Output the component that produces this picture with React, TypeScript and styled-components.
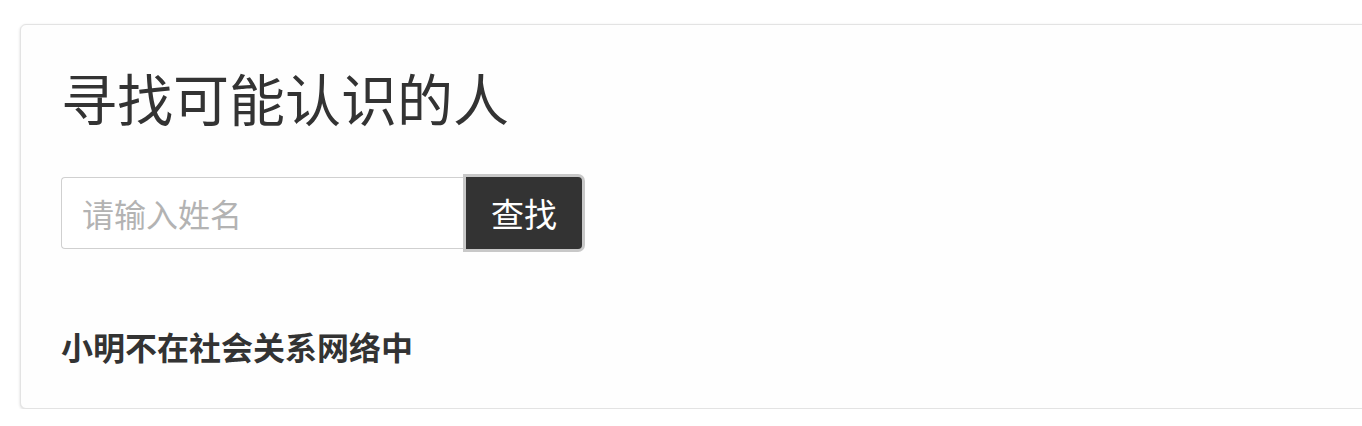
import React from "react";
import styled, { createGlobalStyle } from "styled-components";

const GlobalStyle = createGlobalStyle`
  html, body {
    margin: 0;
    padding: 0;
    background: #ffffff;
    overflow: hidden;
  }
  body {
    font-family: "Noto Sans CJK SC", "Noto Sans", sans-serif;
    color: #333333;
  }
  * { box-sizing: border-box; }
`;

const Page = styled.div`
  padding: 24px 0 0 20px;
  width: 100%;
`;

const Card = styled.section`
  width: calc(100% + 40px);
  background: #fefefe;
  border: 1px solid #e3e3e3;
  border-radius: 6px;
  box-shadow: 0 1px 3px rgba(0, 0, 0, 0.16);
  padding: 44px 40px 46px;
`;

const Title = styled.h1`
  margin: 0;
  font-size: 56px;
  line-height: 1;
  font-weight: 400;
  color: #333333;
`;

const SearchRow = styled.form`
  display: flex;
  align-items: stretch;
  margin-top: 52px;
  height: 72px;
`;

const NameInput = styled.input`
  width: 405px;
  height: 100%;
  border: 1px solid #d0d0d0;
  border-right: none;
  border-radius: 4px 0 0 4px;
  padding: 0 20px;
  font-family: "Noto Sans CJK SC", sans-serif;
  font-size: 32px;
  color: #333333;
  background: #ffffff;
  outline: none;
  &::placeholder {
    color: #b3b3b3;
  }
`;

const SearchButton = styled.button`
  height: 100%;
  padding: 0 25px 0 25px;
  border: none;
  border-radius: 0 4px 4px 0;
  background: #333333;
  color: #ffffff;
  font-family: "Noto Sans CJK SC", sans-serif;
  font-size: 33px;
  line-height: 1;
  box-shadow: 0 0 0 3px #c8c8c8;
  cursor: pointer;
`;

const Result = styled.p`
  margin: 81px 0 0;
  font-size: 32px;
  line-height: 1;
  font-weight: 700;
  color: #333333;
`;

export default function App() {
  return (
    <>
      <GlobalStyle />
      <Page>
        <Card>
          <Title>寻找可能认识的人</Title>
          <SearchRow onSubmit={(e) => e.preventDefault()}>
            <NameInput type="text" placeholder="请输入姓名" />
            <SearchButton type="submit">查找</SearchButton>
          </SearchRow>
          <Result>小明不在社会关系网络中</Result>
        </Card>
      </Page>
    </>
  );
}
